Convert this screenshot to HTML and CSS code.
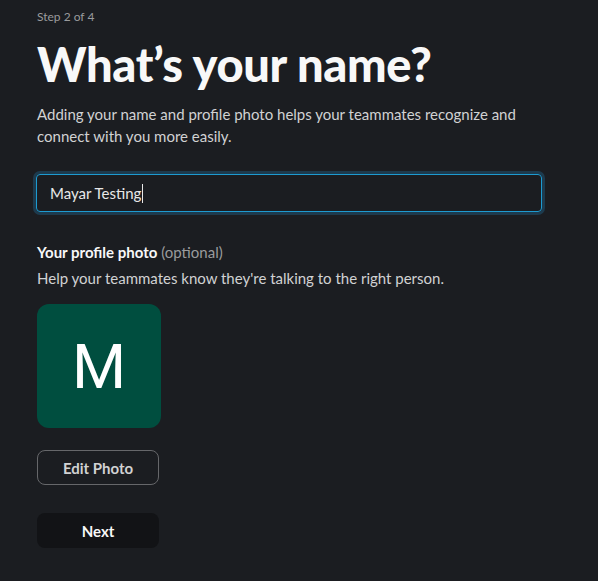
FILE: index.html
```html
<!DOCTYPE html>
<html lang="en">
<head>
    <meta charset="UTF-8">
    <meta name="viewport" content="width=device-width, initial-scale=1.0">
    <title>What's your name?</title>
    <link rel="stylesheet" href="styles.css">
</head>
<body>
    <div class="setup">
        <div class="step">Step 2 of 4</div>
        <h1>What’s your name?</h1>
        <p class="intro">Adding your name and profile photo helps your teammates recognize and connect with you more easily.</p>
        <div class="name-field">
            <span class="name-value">Mayar Testing</span><span class="caret"></span>
        </div>
        <div class="photo-label"><strong>Your profile photo</strong> <span class="optional">(optional)</span></div>
        <p class="photo-help">Help your teammates know they're talking to the right person.</p>
        <div class="avatar">M</div>
        <button class="btn btn-outline">Edit Photo</button>
        <button class="btn btn-dark">Next</button>
    </div>
</body>
</html>
```

FILE: styles.css
```css
body {
    margin: 0;
    background-color: #1b1d21;
    font-family: Lato, "Noto Sans", sans-serif;
    color: #d1d2d3;
}
.setup {
    padding: 8px 37px;
}
.step {
    font-size: 12px;
    color: #9a9b9d;
    line-height: 18px;
}
h1 {
    font-size: 47px;
    font-weight: 900;
    color: #f8f8f8;
    margin: 8px 0 0;
    line-height: 60px;
    letter-spacing: -0.3px;
}
.intro {
    font-size: 15px;
    line-height: 22px;
    margin: 9px 0 0;
    max-width: 520px;
}
.name-field {
    margin: 27px 0 0 -1px;
    width: 506px;
    height: 38px;
    box-sizing: border-box;
    border: 1px solid #1d9bd1;
    border-radius: 4px;
    box-shadow: 0 0 0 3px #1d3a4d;
    display: flex;
    align-items: center;
    padding-left: 13px;
    font-size: 15px;
    color: #e8e8e8;
}
.caret {
    display: inline-block;
    width: 1px;
    height: 19px;
    background: #e8e8e8;
    margin-left: 1px;
}
.photo-label {
    margin-top: 29px;
    font-size: 15px;
    line-height: 22px;
}
.photo-label strong {
    color: #f8f8f8;
    font-weight: 700;
}
.optional {
    color: #9a9b9d;
}
.photo-help {
    margin: 4px 0 0;
    font-size: 15px;
    line-height: 22px;
}
.avatar {
    margin-top: 15px;
    width: 124px;
    height: 124px;
    border-radius: 12px;
    background-color: #004e3f;
    color: #ffffff;
    font-family: Roboto, "Liberation Sans", sans-serif;
    font-size: 62px;
    display: flex;
    align-items: center;
    justify-content: center;
}
.btn {
    display: block;
    width: 122px;
    height: 35px;
    border-radius: 8px;
    font-family: Lato, sans-serif;
    font-size: 15px;
    font-weight: 700;
    cursor: pointer;
}
.btn-outline {
    margin-top: 22px;
    background: transparent;
    border: 1px solid #66676a;
    color: #d1d2d3;
}
.btn-dark {
    margin-top: 28px;
    background: #121316;
    border: none;
    color: #f8f8f8;
}
```
